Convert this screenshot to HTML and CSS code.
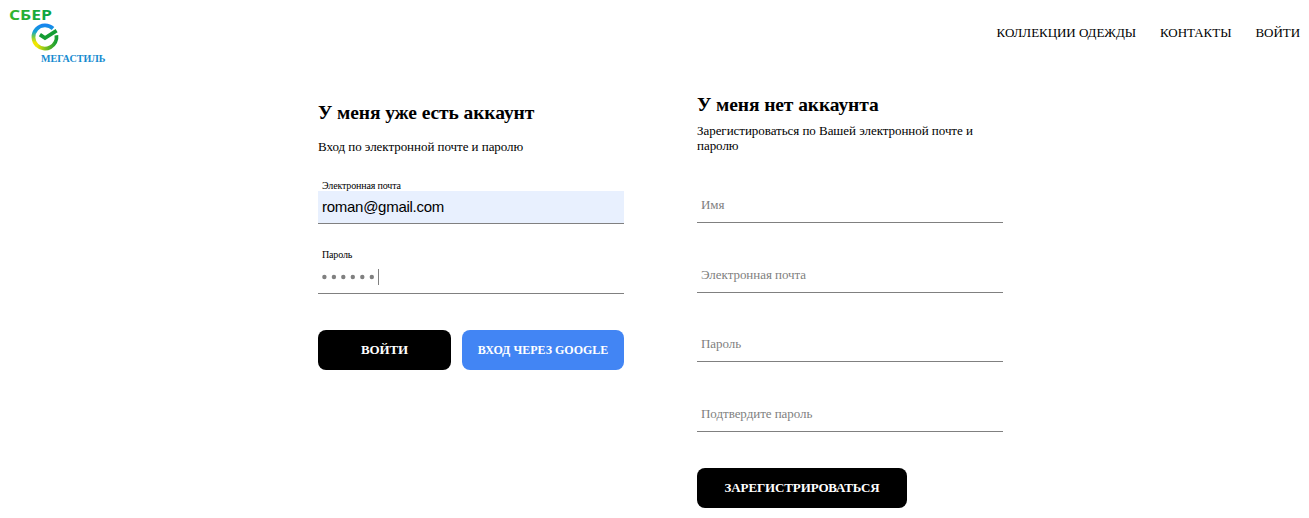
FILE: index.html
```html
<!DOCTYPE html>
<html lang="ru">
<head>
<meta charset="utf-8">
<title>Мегастиль</title>
<link rel="stylesheet" href="styles.css">
</head>
<body>
<header class="header">
  <a class="logo" aria-label="Сбер Мегастиль">
    <svg width="110" height="70" viewBox="0 0 110 70">
      <defs>
        <linearGradient id="word" x1="0" x2="1" y1="0" y2="0">
          <stop offset="0" stop-color="#35b52d"/><stop offset="1" stop-color="#07a344"/>
        </linearGradient>
        <linearGradient id="left" x1="0" x2="0" y1="0" y2="1">
          <stop offset="0" stop-color="#1686ee"/><stop offset=".32" stop-color="#14a5cf"/><stop offset=".55" stop-color="#6fca4c"/><stop offset=".85" stop-color="#f2e600"/>
        </linearGradient>
        <linearGradient id="bottom" x1="0" x2="1" y1="0" y2="0">
          <stop offset="0" stop-color="#f2e600"/><stop offset=".45" stop-color="#79bf20"/><stop offset="1" stop-color="#149d33"/>
        </linearGradient>
      </defs>
      <text class="logo-sber" x="9" y="20.2" textLength="43" lengthAdjust="spacingAndGlyphs" fill="url(#word)">СБЕР</text>
      <g fill="none" stroke-width="3.8">
        <path d="M53 28.5A11.6 11.6 0 0 0 37.2 45.6" stroke="url(#left)"/>
        <path d="M37 45.4A11.6 11.6 0 0 0 56.4 35.2" stroke="url(#bottom)"/>
        <path d="M39.9 34.6L45 38L56.6 30.6" stroke="#149d33" stroke-width="3.8"/>
      </g>
      <text class="logo-mega" x="41" y="61.5" textLength="64.5" lengthAdjust="spacingAndGlyphs">МЕГАСТИЛЬ</text>
    </svg>
  </a>
  <nav class="nav">
    <a>КОЛЛЕКЦИИ ОДЕЖДЫ</a>
    <a>КОНТАКТЫ</a>
    <a>ВОЙТИ</a>
  </nav>
</header>
<main class="auth">
  <section class="panel sign-in">
    <h2>У меня уже есть аккаунт</h2>
    <p>Вход по электронной почте и паролю</p>
    <div class="field">
      <span class="label">Электронная почта</span>
      <div class="value email">roman@gmail.com</div>
    </div>
    <div class="field">
      <span class="label">Пароль</span>
      <div class="value password">
        <svg width="58" height="18" viewBox="0 0 58 18">
          <g fill="#808080"><circle cx="2.4" cy="9" r="2.2"/><circle cx="11.9" cy="9" r="2.2"/><circle cx="21.3" cy="9" r="2.2"/><circle cx="30.8" cy="9" r="2.2"/><circle cx="40.3" cy="9" r="2.2"/><circle cx="49.8" cy="9" r="2.2"/><rect x="56" y="1" width="1" height="16"/></g>
        </svg>
      </div>
    </div>
    <div class="buttons">
      <button class="button">ВОЙТИ</button>
      <button class="button google">ВХОД ЧЕРЕЗ GOOGLE</button>
    </div>
  </section>
  <section class="panel sign-up">
    <h2>У меня нет аккаунта</h2>
    <p>Зарегистироваться по Вашей электронной почте и паролю</p>
    <div class="fields">
      <div class="line">Имя</div>
      <div class="line">Электронная почта</div>
      <div class="line">Пароль</div>
      <div class="line">Подтвердите пароль</div>
    </div>
    <button class="button register">ЗАРЕГИСТРИРОВАТЬСЯ</button>
  </section>
</main>
</body>
</html>
```
FILE: styles.css
```css
* { box-sizing: border-box; }
body {
  margin: 0;
  height: 518px;
  overflow: hidden;
  background: #fff;
  color: #000;
  font: 13px/15px "Liberation Serif", "Times New Roman", serif;
  letter-spacing: -.045px;
}
.header {
  display: flex;
  justify-content: space-between;
  height: 70px;
  padding-right: 9px;
}
.logo-sber { font: 700 13.5px "Open Sans", sans-serif; letter-spacing: 0; }
.logo-mega { font: 700 9.5px "Liberation Serif", serif; letter-spacing: 0; fill: #168bd0; }
.nav { display: flex; gap: 24px; padding-top: 25px; }
.auth { display: flex; gap: 73px; padding-left: 318px; }
.panel { width: 306px; }
.sign-in { padding-top: 32px; }
.sign-up { padding-top: 24px; }
h2 { margin: 0; font-size: 19.5px; line-height: 22px; letter-spacing: -.09px; white-space: nowrap; }
p { margin: 0; }
.sign-in p { margin-top: 15px; height: 15px; }
.sign-up p { margin-top: 7px; height: 30px; }
.field { height: 44px; }
.sign-in p + .field { margin-top: 26px; }
.field + .field { margin-top: 25px; }
.label {
  display: block;
  height: 11px;
  padding-left: 4px;
  font-size: 10px;
  line-height: 11px;
  letter-spacing: -.15px;
}
.value {
  display: flex;
  align-items: center;
  height: 33px;
  padding-left: 4px;
  border-bottom: 1px solid #808080;
}
.email {
  padding-bottom: 2px;
  background: #e8f0fe;
  font: 15px/17px "Liberation Sans", Arial, sans-serif;
  letter-spacing: -.27px;
}
.password { height: 34px; }
.buttons { display: flex; justify-content: space-between; margin-top: 37px; }
.button {
  width: 133px;
  height: 40px;
  padding: 0 0 1px;
  border: 0;
  border-radius: 8px;
  background: #000;
  color: #fff;
  font: 700 13px/15px "Liberation Serif", "Times New Roman", serif;
  letter-spacing: -.13px;
}
.google { width: 162px; padding: 0; background: #4285f4; font-size: 12px; letter-spacing: 0; }
.fields { display: grid; grid-template-rows: 70px 70px 69px 70px; }
.line {
  display: flex;
  align-items: flex-end;
  padding: 0 4px 10px;
  border-bottom: 1px solid #808080;
  color: #808080;
}
.register { width: 210px; margin-top: 36px; }
```
